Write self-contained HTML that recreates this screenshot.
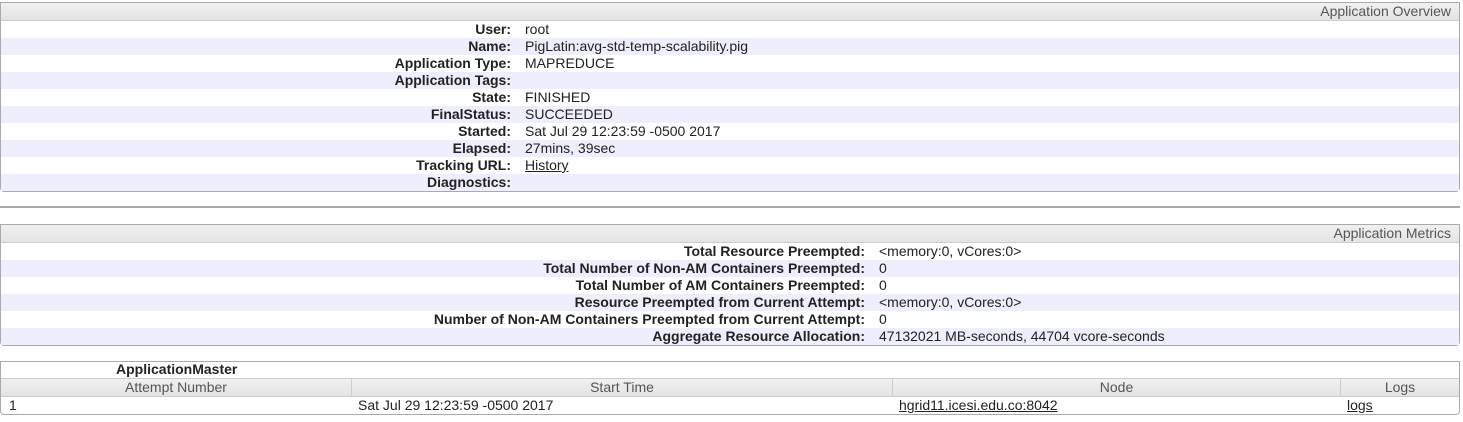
<!DOCTYPE html>
<html><head><style>
body{margin:0;background:#fff;font-family:"Liberation Sans",sans-serif;font-size:14px;color:#222;position:relative;width:1463px;height:422px;overflow:hidden}
.box{position:absolute;left:0;width:1458px;border:1px solid #aaa;border-radius:0 0 4px 4px;background:#fff}
.hd{height:17px;border-bottom:1px solid #ccc;background:linear-gradient(#f0f0f0,#e4e4e4);text-align:right;color:#555;font-size:14px;line-height:17px;padding-right:8px}
.r{height:17px;line-height:17px;position:relative}
.r:nth-child(even){background:#eeeefc}
.l{position:absolute;right:0;text-align:right;font-weight:bold}
.v{position:absolute}
a{color:#222;text-decoration:underline}
</style></head><body>
<div class="box" style="top:2px;height:188px">
<div class="hd">Application Overview</div>
<div>
<div class="r"><span class="l" style="right:948px">User:</span><span class="v" style="left:524px">root</span></div>
<div class="r"><span class="l" style="right:948px">Name:</span><span class="v" style="left:524px">PigLatin:avg-std-temp-scalability.pig</span></div>
<div class="r"><span class="l" style="right:948px">Application Type:</span><span class="v" style="left:524px">MAPREDUCE</span></div>
<div class="r"><span class="l" style="right:948px">Application Tags:</span></div>
<div class="r"><span class="l" style="right:948px">State:</span><span class="v" style="left:524px">FINISHED</span></div>
<div class="r"><span class="l" style="right:948px">FinalStatus:</span><span class="v" style="left:524px">SUCCEEDED</span></div>
<div class="r"><span class="l" style="right:948px">Started:</span><span class="v" style="left:524px">Sat Jul 29 12:23:59 -0500 2017</span></div>
<div class="r"><span class="l" style="right:948px">Elapsed:</span><span class="v" style="left:524px">27mins, 39sec</span></div>
<div class="r"><span class="l" style="right:948px">Tracking URL:</span><span class="v" style="left:524px"><a>History</a></span></div>
<div class="r"><span class="l" style="right:948px">Diagnostics:</span></div>
</div></div>
<div style="position:absolute;top:206px;left:0;width:1460px;height:2px;background:#aaa"></div>
<div class="box" style="top:224px;height:120px">
<div class="hd">Application Metrics</div>
<div>
<div class="r"><span class="l" style="right:594px">Total Resource Preempted:</span><span class="v" style="left:878px">&lt;memory:0, vCores:0&gt;</span></div>
<div class="r"><span class="l" style="right:594px">Total Number of Non-AM Containers Preempted:</span><span class="v" style="left:878px">0</span></div>
<div class="r"><span class="l" style="right:594px">Total Number of AM Containers Preempted:</span><span class="v" style="left:878px">0</span></div>
<div class="r"><span class="l" style="right:594px">Resource Preempted from Current Attempt:</span><span class="v" style="left:878px">&lt;memory:0, vCores:0&gt;</span></div>
<div class="r"><span class="l" style="right:594px">Number of Non-AM Containers Preempted from Current Attempt:</span><span class="v" style="left:878px">0</span></div>
<div class="r"><span class="l" style="right:594px">Aggregate Resource Allocation:</span><span class="v" style="left:878px">47132021 MB-seconds, 44704 vcore-seconds</span></div>
</div></div>
<div class="box" style="top:361px;height:52px">
<div style="height:16px;line-height:15px;font-weight:bold;padding-left:115px">ApplicationMaster</div>
<div style="position:relative;height:17px;line-height:17px;background:linear-gradient(#f0f0f0,#e4e4e4);border-top:1px solid #ccc;border-bottom:1px solid #ccc;color:#555">
<div style="position:absolute;left:0;width:350px;text-align:center;border-right:1px solid #ccc">Attempt Number</div>
<div style="position:absolute;left:351px;width:540px;text-align:center;border-right:1px solid #ccc">Start Time</div>
<div style="position:absolute;left:892px;width:447px;text-align:center;border-right:1px solid #ccc">Node</div>
<div style="position:absolute;left:1340px;width:118px;text-align:center">Logs</div>
</div>
<div style="position:relative;height:17px;line-height:17px">
<span style="position:absolute;left:8px">1</span>
<span style="position:absolute;left:357px">Sat Jul 29 12:23:59 -0500 2017</span>
<span style="position:absolute;left:898px"><a>hgrid11.icesi.edu.co:8042</a></span>
<span style="position:absolute;left:1346px"><a>logs</a></span>
</div>
</div>
</body></html>
